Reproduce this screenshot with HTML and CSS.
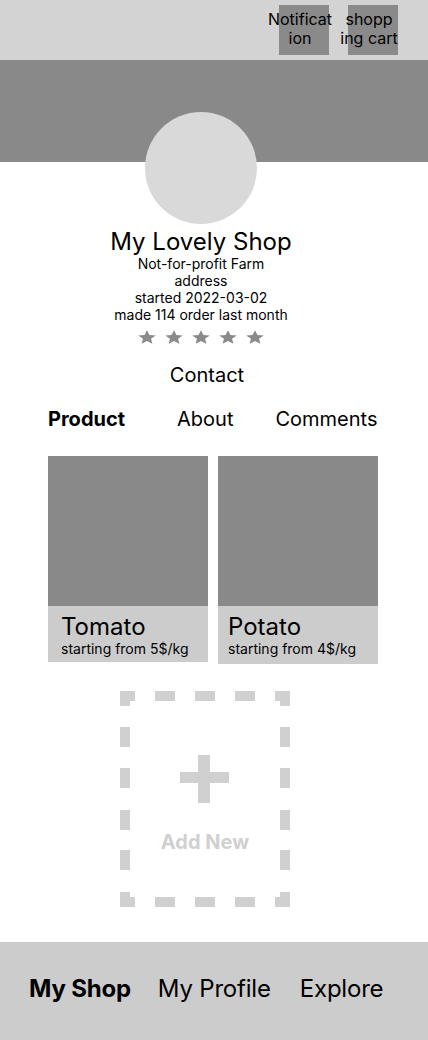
FILE: index.html
```html
<!DOCTYPE html>
<html>
<head>
<meta charset="utf-8">
<link rel="stylesheet" href="styles.css">
</head>
<body>
<div class="page">
  <header class="topbar">
    <div class="tbox"><span class="tlabel">Notificat<br>ion</span></div>
    <div class="tbox"><span class="tlabel">shopp<br>ing cart</span></div>
  </header>
  <div class="banner"></div>
  <section class="profile">
    <div class="avatar"></div>
    <h1 class="shop-name">My Lovely Shop</h1>
    <div class="meta">
      <div>Not-for-profit Farm</div>
      <div>address</div>
      <div>started 2022-03-02</div>
      <div>made 114 order last month</div>
    </div>
    <div class="stars">
      <svg viewBox="0 0 24 24" preserveAspectRatio="none"><polygon points="12,2 14.9,8.9 22.5,9.6 16.8,14.6 18.5,22 12,18.1 5.5,22 7.2,14.6 1.5,9.6 9.1,8.9"/></svg>
      <svg viewBox="0 0 24 24" preserveAspectRatio="none"><polygon points="12,2 14.9,8.9 22.5,9.6 16.8,14.6 18.5,22 12,18.1 5.5,22 7.2,14.6 1.5,9.6 9.1,8.9"/></svg>
      <svg viewBox="0 0 24 24" preserveAspectRatio="none"><polygon points="12,2 14.9,8.9 22.5,9.6 16.8,14.6 18.5,22 12,18.1 5.5,22 7.2,14.6 1.5,9.6 9.1,8.9"/></svg>
      <svg viewBox="0 0 24 24" preserveAspectRatio="none"><polygon points="12,2 14.9,8.9 22.5,9.6 16.8,14.6 18.5,22 12,18.1 5.5,22 7.2,14.6 1.5,9.6 9.1,8.9"/></svg>
      <svg viewBox="0 0 24 24" preserveAspectRatio="none"><polygon points="12,2 14.9,8.9 22.5,9.6 16.8,14.6 18.5,22 12,18.1 5.5,22 7.2,14.6 1.5,9.6 9.1,8.9"/></svg>
    </div>
    <div class="contact">Contact</div>
  </section>
  <nav class="tabs">
    <span class="tab active">Product</span>
    <span class="tab about">About</span>
    <span class="tab comments">Comments</span>
  </nav>
  <section class="products">
    <div class="card">
      <div class="card-img"></div>
      <div class="card-label">
        <div class="card-name">Tomato</div>
        <div class="card-price">starting from 5$/kg</div>
      </div>
    </div>
    <div class="card">
      <div class="card-img"></div>
      <div class="card-label tall">
        <div class="card-name">Potato</div>
        <div class="card-price">starting from 4$/kg</div>
      </div>
    </div>
  </section>
  <section class="add-wrap">
    <div class="add-new">
      <svg class="dash" width="170" height="216" viewBox="0 0 170 216">
        <g stroke="#d0d0d0" stroke-width="10" fill="none">
          <line x1="0" y1="5" x2="170" y2="5" stroke-dasharray="15 20 20 20 20 20 20 20 15"/>
          <line x1="0" y1="211" x2="170" y2="211" stroke-dasharray="15 20 20 20 20 20 20 20 15"/>
          <line x1="5" y1="0" x2="5" y2="216" stroke-dasharray="15 21 20 21 20 22 20 20 20 22 15"/>
          <line x1="165" y1="0" x2="165" y2="216" stroke-dasharray="15 21 20 21 20 22 20 20 20 22 15"/>
        </g>
      </svg>
      <div class="plus"></div>
      <div class="add-label">Add New</div>
    </div>
  </section>
  <footer class="bottom-nav">
    <span class="nav-item active">My Shop</span>
    <span class="nav-item">My Profile</span>
    <span class="nav-item explore">Explore</span>
  </footer>
</div>
</body>
</html>
```

FILE: styles.css
```css
* { box-sizing: border-box; margin: 0; padding: 0; }
html, body { background: #ffffff; }
body {
  font-family: Inter, "Noto Sans", sans-serif;
  color: #000;
}
.page {
  width: 428px;
  height: 1040px;
  display: flex;
  flex-direction: column;
  overflow: hidden;
}
.topbar {
  height: 60px;
  background: #d3d3d3;
  display: flex;
  justify-content: flex-end;
  align-items: flex-start;
  gap: 19px;
  padding: 5px 30px 0 0;
}
.tbox {
  width: 50px;
  height: 50px;
  background: #8a8a8a;
  display: flex;
  justify-content: center;
  padding: 5px 8px 0 0;
}
.tlabel {
  font-size: 16px;
  line-height: 19px;
  text-align: center;
  white-space: nowrap;
}
.banner {
  height: 102px;
  background: #898989;
}
.profile {
  display: flex;
  flex-direction: column;
  align-items: center;
  padding-right: 26px;
}
.avatar {
  width: 112px;
  height: 112px;
  border-radius: 50%;
  background: #d9d9d9;
  margin-top: -50px;
}
.shop-name {
  font-weight: 400;
  font-size: 24px;
  line-height: 26px;
  margin-top: 5px;
}
.meta {
  font-size: 14px;
  line-height: 17px;
  text-align: center;
}
.stars {
  display: flex;
  gap: 7px;
  margin-top: 6px;
}
.stars svg {
  width: 20px;
  height: 16px;
  fill: #8a8a8a;
}
.contact {
  font-size: 20px;
  line-height: 24px;
  margin-top: 18px;
  margin-left: 12px;
}
.tabs {
  display: flex;
  padding-left: 48px;
  margin-top: 20px;
  font-size: 20px;
  line-height: 24px;
}
.tab.active { font-weight: 700; }
.tab.about { margin-left: 52px; }
.tab.comments { margin-left: 42px; }
.products {
  display: flex;
  gap: 10px;
  padding-left: 48px;
  margin-top: 25px;
  align-items: flex-start;
}
.card { width: 160px; }
.card-img {
  height: 150px;
  background: #898989;
}
.card-label {
  height: 56px;
  background: #cccccc;
  padding: 6px 0 0 13px;
}
.card-label.tall { height: 58px; padding-left: 10px; }
.card-name {
  font-size: 24px;
  line-height: 29px;
}
.card-price {
  font-size: 14px;
  line-height: 16px;
}
.add-wrap {
  display: flex;
  padding-left: 120px;
  margin-top: 27px;
}
.add-new {
  position: relative;
  width: 170px;
  height: 216px;
}
.dash {
  position: absolute;
  left: 0;
  top: 0;
}
.plus {
  position: absolute;
  left: 60px;
  top: 64px;
  width: 49px;
  height: 48px;
}
.plus::before, .plus::after {
  content: "";
  position: absolute;
  background: #d0d0d0;
}
.plus::before { left: 18px; top: 0; width: 12px; height: 48px; }
.plus::after { left: 0; top: 17px; width: 49px; height: 11px; }
.add-label {
  position: absolute;
  left: 0;
  right: 0;
  top: 139px;
  text-align: center;
  font-size: 20px;
  line-height: 24px;
  font-weight: 700;
  color: #d0d0d0;
}
.bottom-nav {
  margin-top: auto;
  height: 98px;
  background: #cccccc;
  display: flex;
  align-items: center;
  padding: 0 0 6px 29px;
  gap: 27px;
  font-size: 24px;
  line-height: 29px;
  letter-spacing: -0.2px;
}
.nav-item.explore { margin-left: 2px; }
.nav-item.active { font-weight: 700; }
```
